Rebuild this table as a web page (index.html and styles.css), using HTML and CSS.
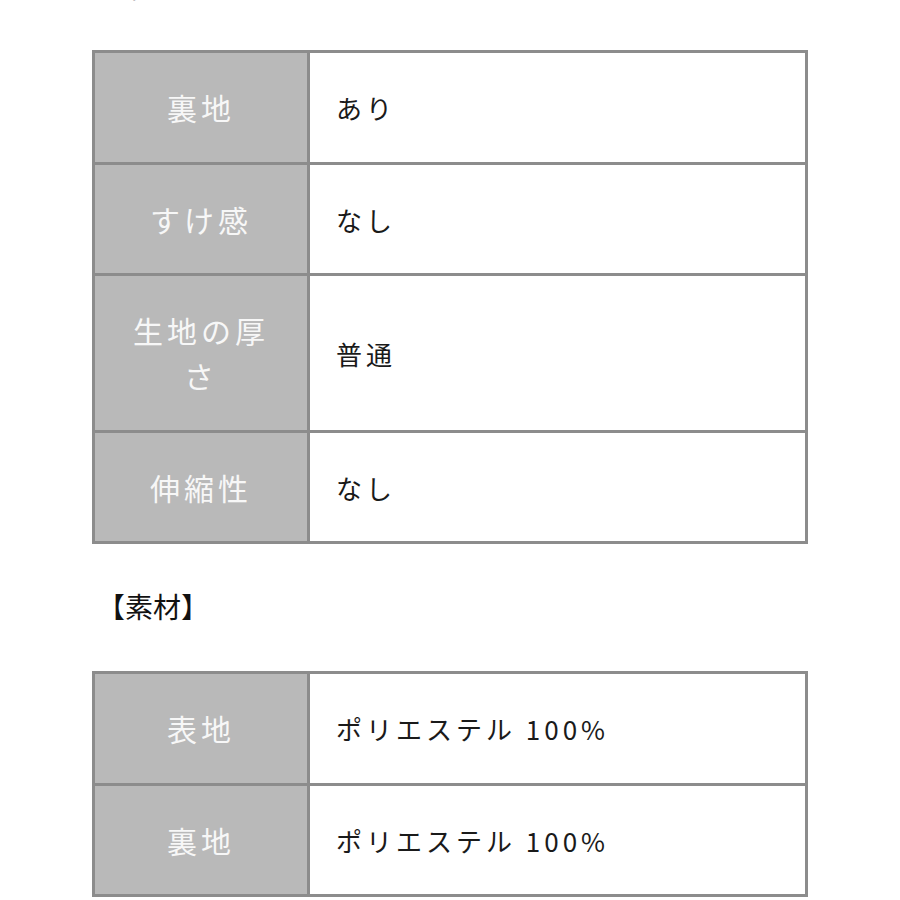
FILE: index.html
```html
<!DOCTYPE html>
<html lang="ja">
<head>
<meta charset="utf-8">
<link rel="stylesheet" href="styles.css">
</head>
<body>
<div class="page">
  <h2 class="heading heading-top">【仕様】</h2>
  <table class="spec">
    <colgroup><col class="col-label"><col class="col-value"></colgroup>
    <tr><th>裏地</th><td>あり</td></tr>
    <tr><th>すけ感</th><td>なし</td></tr>
    <tr><th>生地の厚さ</th><td>普通</td></tr>
    <tr><th>伸縮性</th><td>なし</td></tr>
  </table>
  <h2 class="heading">【素材】</h2>
  <table class="spec">
    <colgroup><col class="col-label"><col class="col-value"></colgroup>
    <tr><th>表地</th><td>ポリエステル 100%</td></tr>
    <tr><th>裏地</th><td>ポリエステル 100%</td></tr>
  </table>
</div>
</body>
</html>
```
FILE: styles.css
```css
html, body {
  margin: 0;
  padding: 0;
  background: #fff;
}
body {
  font-family: "Noto Sans CJK JP", "Noto Sans", sans-serif;
  color: #1e1e1e;
}
.page {
  width: 716px;
  margin: 0 auto;
}
.heading {
  margin: 0 0 45px 5px;
  font-weight: normal;
  font-size: 28px;
  line-height: 40px;
  height: 40px;
  color: #111;
}
.heading-top {
  margin-top: -34px;
  margin-bottom: 44px;
  margin-left: 8px;
}
.spec {
  width: 716px;
  border-collapse: collapse;
  table-layout: fixed;
  margin-bottom: 42px;
}
.col-label {
  width: 215px;
}
.spec th, .spec td {
  border: 3px solid #8c8c8c;
  padding: 32px 0 31.5px;
  line-height: 45px;
  font-weight: normal;
  vertical-align: middle;
}
.spec th {
  background: #b9b9b9;
  color: #f7f7f7;
  font-size: 30px;
  letter-spacing: 4px;
  text-align: center;
  padding-left: 23px;
  padding-right: 23px;
}
.spec td {
  background: #fff;
  text-align: left;
  font-size: 26px;
  letter-spacing: 4px;
  padding-left: 26px;
  color: #1a1a1a;
}
```
